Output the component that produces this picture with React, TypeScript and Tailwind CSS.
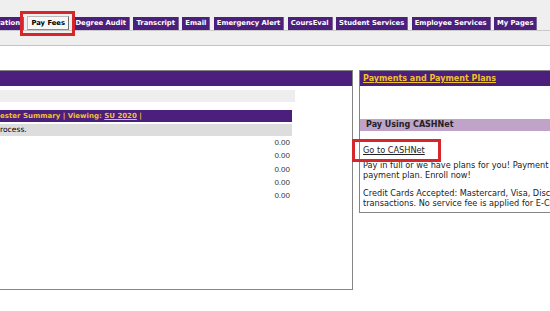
const tabs = [
  { label: 'ration', active: false },
  { label: 'Pay Fees', active: true },
  { label: 'Degree Audit', active: false },
  { label: 'Transcript', active: false },
  { label: 'Email', active: false },
  { label: 'Emergency Alert', active: false },
  { label: 'CoursEval', active: false },
  { label: 'Student Services', active: false },
  { label: 'Employee Services', active: false },
  { label: 'My Pages', active: false },
];

const amounts = ['0.00', '0.00', '0.00', '0.00', '0.00'];

function TopNav() {
  return (
    <div className="h-[46px] bg-[#efefef] border-b border-[#b9c6d3] pt-[17px]">
      <div className="flex items-end gap-[3.4px] ml-[-6px] border-b border-[#c9c9c9] h-[14px]">
        {tabs.map((tab) =>
          tab.active ? (
            <div key={tab.label} className="relative">
              <div className="h-[14px] px-[3px] bg-[#f7f7f7] border border-t-[#bcbcbc] border-l-[#bcbcbc] border-r-[#6f6f6f] border-b-[#8a8a8a] text-black font-bold text-[6.8px] leading-[12px] whitespace-nowrap">
                {tab.label}
              </div>
              <div className="absolute -left-[7px] -right-[6px] -top-[5px] -bottom-[6px] border-[3px] border-[#d7262b]" />
            </div>
          ) : (
            <div
              key={tab.label}
              className="h-[13px] px-[3px] bg-[#4b1f7b] border-r border-[#7a6696] text-white font-bold text-[6.8px] leading-[13px] whitespace-nowrap"
            >
              {tab.label}
            </div>
          )
        )}
      </div>
    </div>
  );
}

function LeftPanel() {
  return (
    <div className="w-[353px] h-[220px] shrink-0 border-t border-r border-b border-[#858585]">
      <div className="h-[15px] bg-[#4b1f7b]" />
      <div className="mt-[4px] w-[295px] h-[12px] bg-[#eeeeee]" />
      <div className="mt-[8px] w-[292px] h-[12px] bg-[#4b1f7b] text-[#f2c12e] font-bold text-[7px] leading-[12px] whitespace-nowrap">
        ester Summary | Viewing: <span className="underline">SU 2020</span> |
      </div>
      <div className="mt-[2px] w-[292px] h-[12px] bg-[#dddddd] text-black text-[7.6px] leading-[12px]">
        rocess.
      </div>
      <div className="w-[292px] pr-[2px] font-['Liberation_Sans',sans-serif] text-[8px] text-[#333] text-right">
        {amounts.map((a, i) => (
          <div key={i} className="h-[13.33px] leading-[13.33px]">
            {a}
          </div>
        ))}
      </div>
    </div>
  );
}

function RightPanel() {
  return (
    <div className="w-[230px] h-[143px] shrink-0 border border-[#858585]">
      <div className="h-[15px] bg-[#4b1f7b] px-[3px] text-[#f2c12e] font-bold text-[8px] leading-[15px] underline whitespace-nowrap">
        Payments and Payment Plans
      </div>
      <div className="mt-[33px] h-[12px] bg-[#bfa3c9] pl-[6px] text-[#222] font-bold text-[8px] leading-[12px] whitespace-nowrap">
        Pay Using CASHNet
      </div>
      <div className="px-[3px] text-[8.2px] leading-[10px] text-[#222] whitespace-nowrap">
        <div className="mt-[14px]">
          <span className="relative">
            <a className="underline">Go to CASHNet</a>
            <span className="absolute -left-[11px] -right-[16px] -top-[6px] -bottom-[7px] border-[3px] border-[#d7262b]" />
          </span>
        </div>
        <p className="mt-[5px]">
          Pay in full or we have plans for you! Payment options include a
          <br />
          payment plan. Enroll now!
        </p>
        <p className="mt-[8px]">
          Credit Cards Accepted: Mastercard, Visa, Discover and American Express.
          <br />
          transactions. No service fee is applied for E-Check payments.
        </p>
      </div>
    </div>
  );
}

export default function App() {
  return (
    <div className="w-[550px] h-[311px] overflow-hidden bg-white font-['DejaVu_Sans',Verdana,sans-serif]">
      <TopNav />
      <div className="flex gap-[6px] pt-[24px]">
        <LeftPanel />
        <RightPanel />
      </div>
    </div>
  );
}
